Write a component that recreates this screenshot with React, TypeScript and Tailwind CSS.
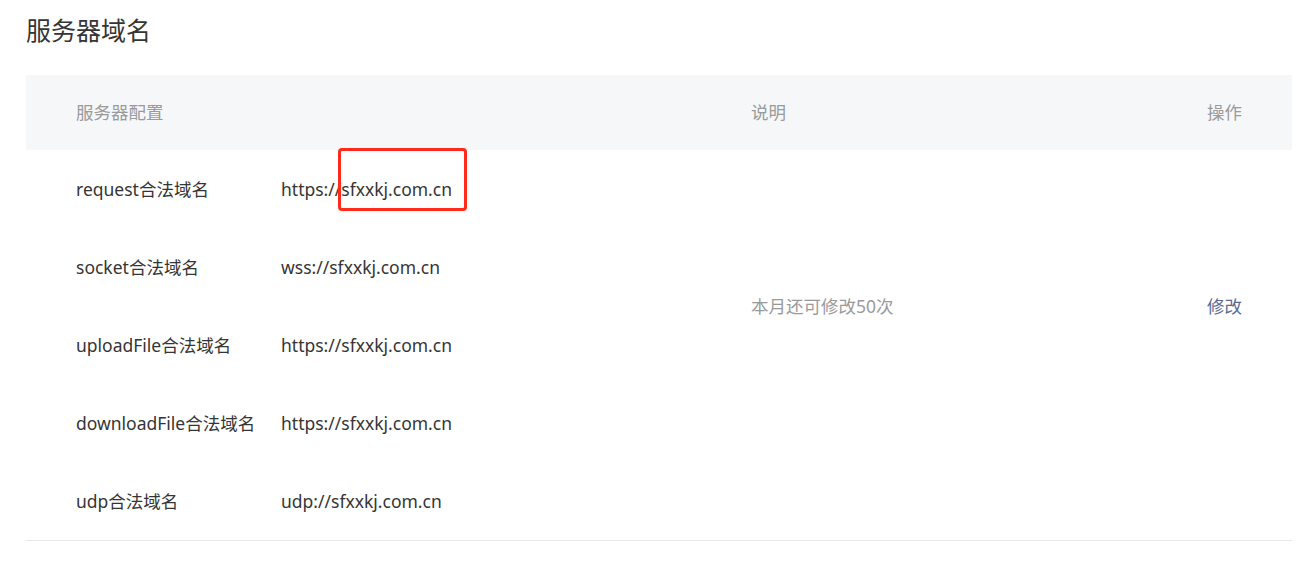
import React from "react";

const rows = [
  { label: "request合法域名", value: "https://sfxxkj.com.cn" },
  { label: "socket合法域名", value: "wss://sfxxkj.com.cn" },
  { label: "uploadFile合法域名", value: "https://sfxxkj.com.cn" },
  { label: "downloadFile合法域名", value: "https://sfxxkj.com.cn" },
  { label: "udp合法域名", value: "udp://sfxxkj.com.cn" },
];

export default function App() {
  return (
    <div
      className="relative w-[1310px] h-[570px] bg-white pl-[26px] text-[17.5px] text-[#353535]"
      style={{ fontFamily: '"Noto Sans", "Noto Sans CJK SC", sans-serif' }}
    >
      <div className="pt-[13px] h-[75px] text-[25px] leading-[34px] text-[#353535]">服务器域名</div>
      <div className="w-[1266px]">
        <div className="grid grid-cols-[725px_456px_1fr] h-[75px] items-center bg-[#f6f7f9] text-[#9a9a9a]">
          <div className="pl-[50px]">服务器配置</div>
          <div>说明</div>
          <div>操作</div>
        </div>
        <div className="grid grid-cols-[725px_456px_1fr] border-b border-[#e7e7eb]">
          <div className="pl-[50px] flex flex-col">
            {rows.map((r) => (
              <div key={r.label} className="flex h-[78px] items-center">
                <div className="w-[205px]">{r.label}</div>
                <div>{r.value}</div>
              </div>
            ))}
          </div>
          <div className="h-[312px] flex items-center text-[#9a9a9a]">本月还可修改50次</div>
          <div className="h-[312px] flex items-center text-[#576b95]">修改</div>
        </div>
      </div>
      <div className="absolute left-[338px] top-[148px] w-[129px] h-[63px] border-[3px] border-[#ff2a1a] rounded-[4px]" />
    </div>
  );
}
